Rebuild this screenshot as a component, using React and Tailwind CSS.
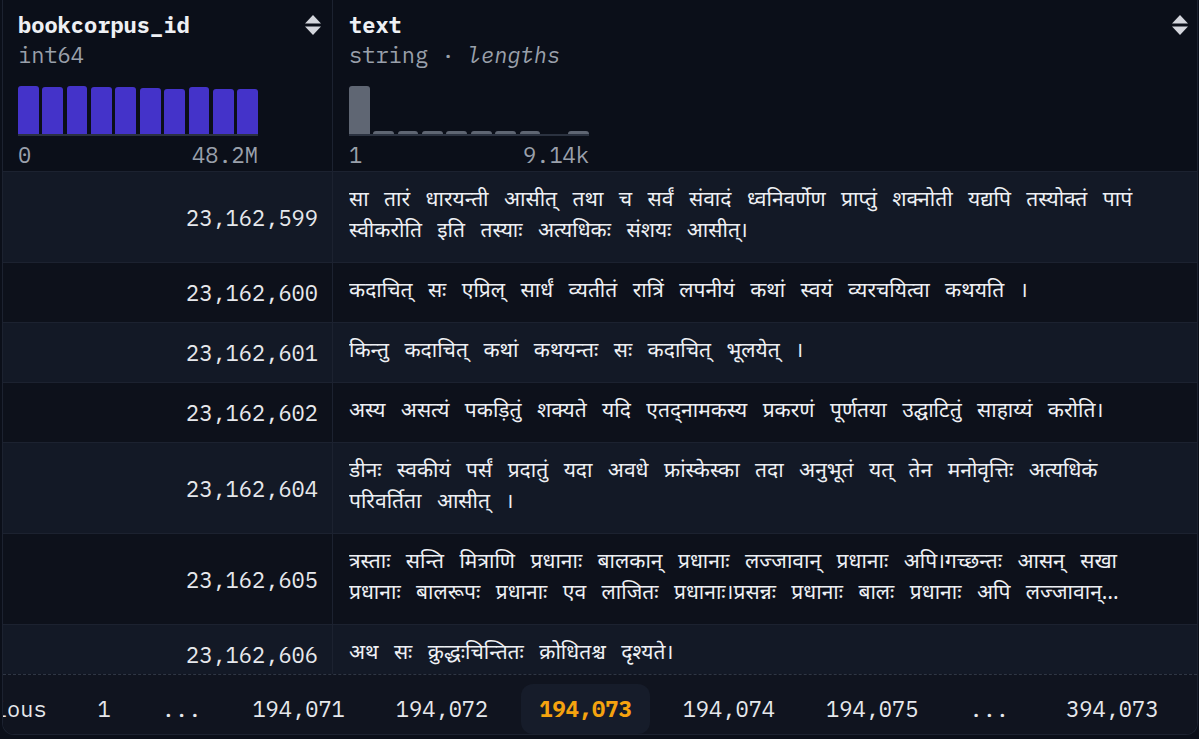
import React from "react";

const mono = "font-['IBM_Plex_Mono','Liberation_Mono','DejaVu_Sans_Mono',monospace]";
const deva = "font-['Noto_Sans_Devanagari','Noto_Sans','Lohit_Devanagari','FreeSans',sans-serif]";

const rows = [
  {
    id: "23,162,599",
    text: "सा तारं धारयन्ती आसीत् तथा च सर्वं संवादं ध्वनिवर्णेण प्राप्तुं शक्नोती यद्यपि तस्योक्तं पापं स्वीकरोति इति तस्याः अत्यधिकः संशयः आसीत्।",
  },
  { id: "23,162,600", text: "कदाचित् सः एप्रिल् सार्धं व्यतीतं रात्रिं लपनीयं कथां स्वयं व्यरचयित्वा कथयति ।" },
  { id: "23,162,601", text: "किन्तु कदाचित् कथां कथयन्तः सः कदाचित् भूलयेत् ।" },
  { id: "23,162,602", text: "अस्य असत्यं पकड़ितुं शक्यते यदि एतद्नामकस्य प्रकरणं पूर्णतया उद्घाटितुं साहाय्यं करोति।" },
  {
    id: "23,162,604",
    text: "डीनः स्वकीयं पर्सं प्रदातुं यदा अवधे फ्रांस्केस्का तदा अनुभूतं यत् तेन मनोवृत्तिः अत्यधिकं परिवर्तिता आसीत् ।",
  },
  {
    id: "23,162,605",
    text: "त्रस्ताः सन्ति मित्राणि प्रधानाः बालकान् प्रधानाः लज्जावान् प्रधानाः अपि।गच्छन्तः आसन् सखा प्रधानाः बालरूपः प्रधानाः एव लाजितः प्रधानाः।प्रसन्नः प्रधानाः बालः प्रधानाः अपि लज्जावान्…",
  },
  { id: "23,162,606", text: "अथ सः क्रुद्धःचिन्तितः क्रोधितश्च दृश्यते।" },
];

const idBars = [48, 47, 48, 47.5, 47, 46, 45.5, 47.5, 45, 45.5];
const lenBars = [48, 3, 3, 3, 3, 3, 3, 3, 0, 3];

const SortIcon = () => (
  <svg width="18" height="22" viewBox="0 0 18 22" className="shrink-0">
    <path d="M9 1 L17 9.5 H1 Z" fill="#d4d6dd" />
    <path d="M9 21 L17 12.5 H1 Z" fill="#d4d6dd" />
  </svg>
);

const Histogram = ({ bars, color, from, to }) => (
  <div className="mt-[18px] w-[240px]">
    <div className="flex h-[48px] items-end gap-[3.6px] border-b-2 border-[#2b3240]">
      {bars.map((h, i) => (
        <div
          key={i}
          className={`flex-1 rounded-t-[3px] ${color}`}
          style={{ height: h }}
        />
      ))}
    </div>
    <div className={`mt-[6px] flex justify-between text-[22px] leading-[26px] text-[#9aa0ab] ${mono}`}>
      <span>{from}</span>
      <span>{to}</span>
    </div>
  </div>
);

const pages = ["Previous", "1", "...", "194,071", "194,072", "194,073", "194,074", "194,075", "...", "394,073"];

export default function App() {
  return (
    <div className="h-[739px] w-[1199px] overflow-hidden bg-[#0b0f19]">
      <div className="ml-[2px] w-[1196px] overflow-hidden rounded-b-xl border-x border-b border-[#1c2230]">
        {/* header */}
        <div className="grid h-[172px] grid-cols-[330px_1fr] border-b border-[#1c2230] bg-[#0b0f19]">
          <div className="flex border-r border-[#1c2230] pl-[15px] pr-[10px] pt-[10px]">
            <div className="flex-1">
              <div className={`text-[22px] font-bold leading-[30px] text-[#eef0f4] ${mono}`}>bookcorpus_id</div>
              <div className={`text-[22px] leading-[30px] text-[#9aa0ab] ${mono}`}>int64</div>
              <Histogram bars={idBars} color="bg-[#4433c9]" from="0" to="48.2M" />
            </div>
            <div className="pt-[4px]">
              <SortIcon />
            </div>
          </div>
          <div className="flex pl-[16px] pr-[8px] pt-[10px]">
            <div className="flex-1">
              <div className={`text-[22px] font-bold leading-[30px] text-[#eef0f4] ${mono}`}>text</div>
              <div className={`text-[22px] leading-[30px] text-[#9aa0ab] ${mono}`}>
                string · <span className="italic">lengths</span>
              </div>
              <Histogram bars={lenBars} color="bg-[#5f6673]" from="1" to="9.14k" />
            </div>
            <div className="pt-[4px]">
              <SortIcon />
            </div>
          </div>
        </div>

        {/* rows */}
        <div className="h-[502px] overflow-hidden">
          {rows.map((r, i) => (
            <div
              key={r.id}
              className={`grid grid-cols-[330px_1fr] border-b border-[#1c2230] ${i % 2 === 0 ? "bg-[#131926]" : "bg-[#0d111b]"}`}
            >
              <div className={`flex items-center justify-end border-r border-[#1c2230] pr-[14px] text-[22px] text-[#e6e8ec] ${mono}`}>
                {r.id}
              </div>
              <div className="py-[14px] pl-[16px] pr-[26px]">
                <p className={`line-clamp-2 text-[21px] leading-[31px] text-[#eef0f4] [word-spacing:10px] ${deva}`}>{r.text}</p>
              </div>
            </div>
          ))}
        </div>

        {/* pagination */}
        <div className="h-[60px] overflow-hidden border-t border-dashed border-[#2f3644] bg-[#10141f]">
          <div className={`ml-[-80px] flex h-full items-start gap-[15px] pt-[9px] text-[22px] ${mono}`}>
            {pages.map((p, i) => (
              <div
                key={i}
                className={`shrink-0 whitespace-nowrap rounded-xl px-[18px] py-[10px] leading-[30px] ${
                  p === "194,073" ? "bg-[#161c2a] font-bold text-[#f5a30f]" : "text-[#e6e8ec]"
                } ${i === 8 ? "pr-[24px]" : ""}`}
              >
                {p}
              </div>
            ))}
          </div>
        </div>
      </div>
    </div>
  );
}
